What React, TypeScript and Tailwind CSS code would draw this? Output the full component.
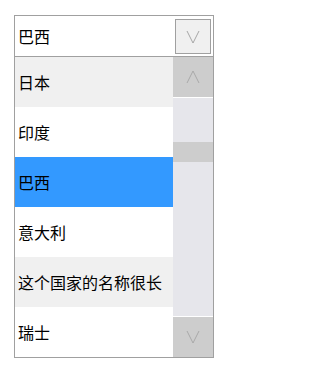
const countries = [
  { name: "日本", bg: "bg-[#f0f0f0]" },
  { name: "印度", bg: "bg-white" },
  { name: "巴西", bg: "bg-[#3399ff]" },
  { name: "意大利", bg: "bg-white" },
  { name: "这个国家的名称很长", bg: "bg-[#f0f0f0]" },
  { name: "瑞士", bg: "bg-white" },
];

function Chevron({ up, color }: { up?: boolean; color: string }) {
  return (
    <svg width="14" height="14" viewBox="0 0 14 14" fill="none">
      <polyline
        points={up ? "1,13 7,1 13,13" : "1,1 7,13 13,1"}
        stroke={color}
        strokeWidth="1"
      />
    </svg>
  );
}

export default function App() {
  return (
    <div className="pt-[15px] pl-[14px] font-['Noto_Sans_CJK_SC',sans-serif] text-[16px] text-black">
      <div className="w-[200px] border border-[#a0a0a0] bg-white">
        {/* Selected value */}
        <div className="h-[41px] flex items-center justify-between border-b border-[#a0a0a0] pl-[3px] pr-[2px]">
          <span className="leading-none">巴西</span>
          <div className="w-[36px] h-[35px] mt-[1px] flex items-center justify-center bg-[#f0f0f0] border border-[#a0a0a0]">
            <Chevron color="#a6a6a6" />
          </div>
        </div>

        {/* Options + scrollbar */}
        <div className="flex">
          <ul className="w-[158px]">
            {countries.map((c) => (
              <li
                key={c.name}
                className={`h-[50px] flex items-center pl-[3px] whitespace-nowrap overflow-hidden ${c.bg}`}
              >
                {c.name}
              </li>
            ))}
          </ul>
          <div className="w-[40px] h-[300px] flex flex-col">
            <div className="h-[40px] flex items-center justify-center bg-[#cdcdcd]">
              <Chevron up color="#a9a9a9" />
            </div>
            <div className="h-px bg-white" />
            <div className="flex-1 bg-[#e6e6eb] pt-[44px]">
              <div className="h-[20px] bg-[#cdcdcd]" />
            </div>
            <div className="h-px bg-white" />
            <div className="h-[40px] flex items-center justify-center bg-[#cdcdcd]">
              <Chevron color="#a9a9a9" />
            </div>
          </div>
        </div>
      </div>
    </div>
  );
}
